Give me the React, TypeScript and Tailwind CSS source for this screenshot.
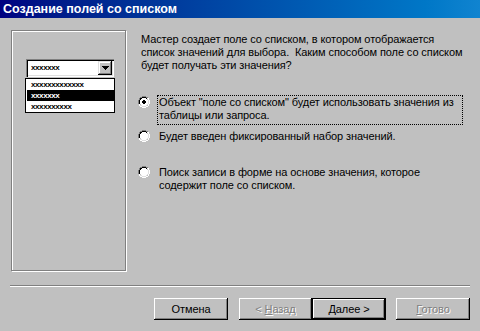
import React from "react";

const Radio = ({ checked }: { checked?: boolean }) => (
  <svg width="12" height="12" viewBox="0 0 12 12" className="shrink-0" shapeRendering="crispEdges">
    <path d="M4 0h4v1H4zM2 1h2v1H2zM8 1h2v1H8zM1 2h1v2H1zM0 4h1v4H0z" fill="#808080" />
    <path d="M4 1h4v1H4zM2 2h2v1H2zM8 2h2v1H8zM1 4h1v4H1zM2 3h1v1H2z" fill="#000" />
    <path d="M4 2h4v1H4zM3 3h6v1H3zM2 4h8v4H2zM3 8h6v1H3zM4 9h4v1H4z" fill="#fff" />
    <path d="M10 4h1v4h-1zM9 8h1v1H9zM8 9h1v1H8zM4 10h4v1H4zM2 9h2v1H2z" fill="#dfdfdf" />
    <path d="M11 4h1v4h-1zM10 8h1v2h-1zM8 10h2v1H8zM4 11h4v1H4zM2 10h2v1H2zM1 8h1v2H1zM9 2h1v1H9zM10 2h1v2h-1z" fill="#fff" />
    {checked && <path d="M5 4h2v1H5zM4 5h4v2H4zM5 7h2v1H5z" fill="#000" />}
  </svg>
);

const Btn = ({
  children,
  disabled,
  def,
  w,
}: {
  children: React.ReactNode;
  disabled?: boolean;
  def?: boolean;
  w: string;
}) => (
  <div className={`${w} h-[22px] shrink-0 ${def ? "border border-black" : ""} bg-[#c0c0c0]`}>
    <div className="w-full h-full flex items-center justify-center shadow-[inset_-1px_-1px_0_#000,inset_1px_1px_0_#fff,inset_-2px_-2px_0_#808080]">
      <span className={disabled ? "text-[#808080] [text-shadow:1px_1px_0_#fff]" : "text-black"}>
        {children}
      </span>
    </div>
  </div>
);

const ph = "text-[8px] leading-[8px] font-bold tracking-[-0.4px]";

export default function App() {
  return (
    <div className="w-[480px] h-[331px] bg-[#c0c0c0] flex flex-col text-[11px] leading-[13px] tracking-[-0.1px] text-black [font-family:'Liberation_Sans',Arial,sans-serif] overflow-hidden">
      <div className="h-[18px] shrink-0 bg-linear-to-r from-[#000080] to-[#1084d0] pl-[3px] text-white font-bold text-[12.5px] tracking-normal leading-[18px] whitespace-nowrap">
        Создание полей со списком
      </div>

      <div className="h-[267px] shrink-0 flex pt-[12px] pl-[11px]">
        <div className="w-[115px] h-[241px] shrink-0 border border-[#808080] shadow-[1px_1px_0_#fff,inset_1px_1px_0_#fff] pl-[14px] pt-[28px]">
          <div className="w-[88px] h-[18px] bg-white shadow-[inset_1px_1px_0_#808080,inset_2px_2px_0_#000,inset_-1px_-1px_0_#fff,inset_-2px_-2px_0_#dfdfdf] flex items-center pl-[5px] pr-[2px]">
            <span className={`flex-1 ${ph}`}>xxxxxxx</span>
            <div className="w-[14px] h-[14px] bg-[#c0c0c0] shadow-[inset_-1px_-1px_0_#000,inset_1px_1px_0_#dfdfdf,inset_-2px_-2px_0_#808080,inset_2px_2px_0_#fff] flex items-center justify-center">
              <svg width="7" height="4" viewBox="0 0 7 4" shapeRendering="crispEdges">
                <path d="M0 0h7v1H0zM1 1h5v1H1zM2 2h3v1H2zM3 3h1v1H3z" fill="#000" />
              </svg>
            </div>
          </div>
          <div className="-ml-[1px] mt-[1px] w-[90px] h-[35px] bg-white border border-black flex flex-col">
            <div className={`h-[11px] flex items-center pl-[5px] ${ph}`}>xxxxxxxxxxxxx</div>
            <div className={`h-[11px] flex items-center pl-[4px] ml-[1px] bg-black text-white ${ph}`}>xxxxxxx</div>
            <div className={`h-[11px] flex items-center pl-[5px] ${ph}`}>xxxxxxxxxx</div>
          </div>
        </div>

        <div className="ml-[12px] flex flex-col">
          <p className="pl-[3px] mt-[3px] whitespace-pre">
            {"Мастер создает поле со списком, в котором отображается\nсписок значений для выбора.  Каким способом поле со списком\nбудет получать эти значения?"}
          </p>

          <div className="mt-[23px] flex items-start">
            <div className="mt-[1px]">
              <Radio checked />
            </div>
            <div className="ml-[7px] w-[306px] border border-dotted border-black pl-[1px] pb-[2px]">
              Объект "поле со списком" будет использовать значения из
              <br />
              таблицы или запроса.
            </div>
          </div>

          <div className="mt-[4px] flex items-start">
            <div className="mt-[1px]">
              <Radio />
            </div>
            <div className="ml-[7px] w-[306px] border border-transparent pl-[1px] pb-[2px]">
              Будет введен фиксированный набор значений.
            </div>
          </div>

          <div className="mt-[19px] flex items-start">
            <div className="mt-[1px]">
              <Radio />
            </div>
            <div className="ml-[7px] w-[306px] border border-transparent pl-[1px] pb-[2px]">
              Поиск записи в форме на основе значения, которое
              <br />
              содержит поле со списком.
            </div>
          </div>
        </div>
      </div>

      <div className="ml-[10px] w-[460px] shrink-0 border-t border-t-[#808080] border-b border-b-white" />

      <div className="mt-[11px] flex pl-[154px]">
        <Btn w="w-[74px]">Отмена</Btn>
        <div className="ml-[11px]">
          <Btn w="w-[73px]" disabled>
            {"< "}
            <span className="underline">Н</span>азад
          </Btn>
        </div>
        <Btn w="w-[74px]" def>
          <span className="underline">Д</span>алее {">"}
        </Btn>
        <div className="ml-[10px]">
          <Btn w="w-[74px]" disabled>
            <span className="underline">Г</span>отово
          </Btn>
        </div>
      </div>
    </div>
  );
}
